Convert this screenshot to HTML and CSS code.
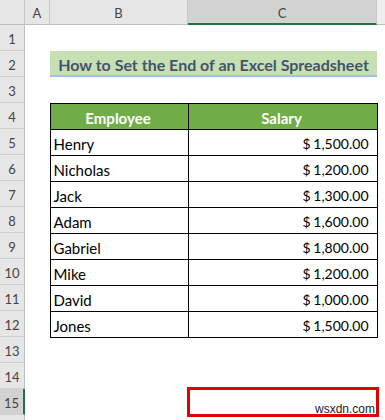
FILE: index.html
```html
<!DOCTYPE html>
<html lang="en">
<head>
    <meta charset="UTF-8">
    <title>How to Set the End of an Excel Spreadsheet</title>
    <link rel="stylesheet" href="styles.css">
</head>
<body>
    <div class="sheet">
        <!-- column headers -->
        <div class="corner"></div>
        <div class="colhead">A</div>
        <div class="colhead">B</div>
        <div class="colhead active">C</div>
        <div class="colhead filler"></div>

        <!-- row headers -->
        <div class="rowhead">1</div>
        <div class="rowhead">2</div>
        <div class="rowhead">3</div>
        <div class="rowhead">4</div>
        <div class="rowhead">5</div>
        <div class="rowhead">6</div>
        <div class="rowhead">7</div>
        <div class="rowhead">8</div>
        <div class="rowhead">9</div>
        <div class="rowhead">10</div>
        <div class="rowhead">11</div>
        <div class="rowhead">12</div>
        <div class="rowhead">13</div>
        <div class="rowhead">14</div>
        <div class="rowhead active">15</div>
        <div class="rowhead"></div>

        <div class="title">How to Set the End of an Excel Spreadsheet</div>

        <table class="data">
            <tr><th>Employee</th><th>Salary</th></tr>
            <tr><td>Henry</td><td class="num">$ 1,500.00</td></tr>
            <tr><td>Nicholas</td><td class="num">$ 1,200.00</td></tr>
            <tr><td>Jack</td><td class="num">$ 1,300.00</td></tr>
            <tr><td>Adam</td><td class="num">$ 1,600.00</td></tr>
            <tr><td>Gabriel</td><td class="num">$ 1,800.00</td></tr>
            <tr><td>Mike</td><td class="num">$ 1,200.00</td></tr>
            <tr><td>David</td><td class="num">$ 1,000.00</td></tr>
            <tr><td>Jones</td><td class="num">$ 1,500.00</td></tr>
        </table>

        <div class="marker"><span class="watermark">wsxdn.com</span></div>
    </div>
</body>
</html>
```

FILE: styles.css
```css
body {
    margin: 0;
    background: #fff;
    font-family: Lato, "Open Sans", sans-serif;
    overflow: hidden;
}

.sheet {
    display: grid;
    grid-template-columns: 25px 25px 138px 189px 8px;
    grid-template-rows: 25px repeat(15, 26px);
    grid-auto-rows: 26px;
    width: 385px;
    height: 420px;
}

/* Header band */
.corner,
.colhead {
    grid-row: 1;
    background: #e6e6e6;
    border-bottom: 1px solid #bfbfbf;
    border-right: 1px solid #c8c8c8;
    box-sizing: border-box;
}
.colhead {
    display: flex;
    align-items: center;
    justify-content: center;
    font-size: 13px;
    color: #444;
    padding-top: 2px;
}
.colhead.active {
    background: #d2d2d2;
    border-bottom: 2px solid #217346;
}
.colhead.filler {
    background: #eeeeee;
    border-right: none;
}

.rowhead {
    grid-column: 1;
    background: #e6e6e6;
    border-bottom: 1px solid #d0d0d0;
    border-right: 1px solid #bfbfbf;
    box-sizing: border-box;
    display: flex;
    align-items: center;
    justify-content: center;
    font-size: 13px;
    color: #444;
    padding-top: 3px;
}
.rowhead.active {
    background: #d2d2d2;
    border-right: 2px solid #217346;
}

/* Title cell */
.title {
    grid-column: 3 / 5;
    grid-row: 3;
    background: #c6e0b4;
    border-bottom: 2px solid #9bc2e6;
    box-sizing: border-box;
    display: flex;
    align-items: center;
    justify-content: center;
    font-weight: bold;
    font-size: 16px;
    color: #44546a;
    padding-top: 2px;
}

/* Data table */
.data {
    grid-column: 3 / 5;
    grid-row: 5 / 14;
    border-collapse: collapse;
    width: 328px;
    height: 235px;
    margin-left: -0.5px;
    font-size: 15px;
}
.data th,
.data td {
    border: 1px solid #000;
    height: 25px;
    padding: 2px 5px 0 3px;
    box-sizing: border-box;
}
.data th {
    background: #70ad47;
    color: #fff;
    font-weight: bold;
    text-align: center;
}
.data th:first-child,
.data td:first-child {
    width: 138px;
}
.data td {
    color: #000;
}
.data td.num {
    text-align: right;
    padding-right: 8px;
    font-size: 14px;
    word-spacing: -1px;
}

/* Selected cell marker */
.marker {
    grid-column: 4;
    grid-row: 16;
    margin: -2px -2px -2px -1px;
    border: 3px solid #e00000;
    position: relative;
}
.watermark {
    position: absolute;
    right: 1px;
    bottom: -2px;
    font-family: "Liberation Sans", Arial, sans-serif;
    font-size: 12px;
    color: #222;
}
```
